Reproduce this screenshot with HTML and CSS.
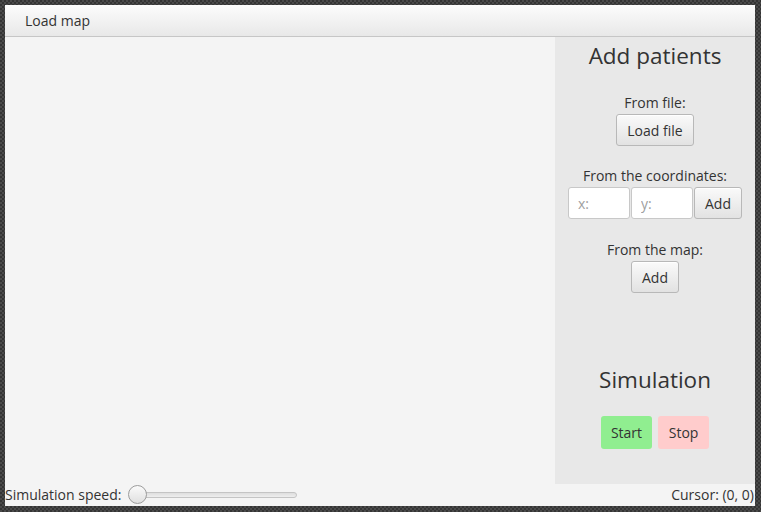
FILE: index.html
```html
<!DOCTYPE html>
<html>
<head>
<meta charset="utf-8">
<title>Simulation</title>
<link rel="stylesheet" href="styles.css">
</head>
<body>
<div class="window">
  <div class="menubar"><span class="menu">Load map</span></div>
  <div class="main">
    <div class="map"></div>
    <aside class="panel">
      <div class="title">Add patients</div>
      <div class="label first">From file:</div>
      <button class="btn">Load file</button>
      <div class="label">From the coordinates:</div>
      <div class="coords">
        <input class="field" type="text" placeholder="x:">
        <input class="field" type="text" placeholder="y:">
        <button class="btn">Add</button>
      </div>
      <div class="label map-label">From the map:</div>
      <button class="btn">Add</button>
      <div class="title sim">Simulation</div>
      <div class="controls">
        <button class="ctl start">Start</button>
        <button class="ctl stop">Stop</button>
      </div>
    </aside>
  </div>
  <div class="statusbar">
    <span class="speed-label">Simulation speed:</span>
    <div class="slider">
      <div class="track"></div>
      <div class="thumb"></div>
    </div>
    <span class="spacer"></span>
    <span class="cursor">Cursor: (0, 0)</span>
  </div>
</div>
</body>
</html>
```
FILE: styles.css
```css
* { box-sizing: border-box; }
html, body { margin: 0; height: 100%; }
body {
  background-color: #3c3c3c;
  background-image: repeating-conic-gradient(#4a4a4a 0 25%, #343434 0 50%);
  background-size: 4px 4px;
  padding: 5px 6px 6px 5px;
  font-family: "Open Sans", "Noto Sans", sans-serif;
  font-size: 14px;
  color: #333;
}
.window {
  width: 750px;
  height: 501px;
  display: flex;
  flex-direction: column;
  background: #f4f4f4;
}
.menubar {
  height: 32px;
  flex: none;
  display: flex;
  align-items: center;
  padding-left: 20px;
  background: linear-gradient(#fcfcfc, #e8e8e8);
  border-bottom: 1px solid #c6c6c6;
}
.menu { line-height: 18px; }
.main { flex: 1; display: flex; min-height: 0; }
.map { flex: 1; background: #f4f4f4; }
.panel {
  width: 200px;
  flex: none;
  background: #e8e8e8;
  display: flex;
  flex-direction: column;
  align-items: center;
  padding-top: 4px;
}
.title { font-size: 22.5px; line-height: 30px; }
.label { line-height: 18px; margin-top: 21px; margin-bottom: 2px; }
.label.first { margin-top: 23px; }
.label.map-label { margin-top: 22px; }
.coords { display: flex; gap: 1px; }
.btn {
  font: inherit;
  color: #333;
  height: 32px;
  padding: 0 10px;
  border: 1px solid #b8b8b8;
  border-radius: 3px;
  background: linear-gradient(#fafafa, #e2e2e2);
  box-shadow: inset 0 1px 0 #fff;
}
.field {
  width: 62px;
  height: 32px;
  font: inherit;
  color: #333;
  padding: 0 0 0 9px;
  border: 1px solid #c8c8c8;
  border-radius: 3px;
  background: #fff;
  outline: none;
}
.field::placeholder { color: #a0a0a0; }
.sim { margin-top: 72px; }
.controls { display: flex; gap: 6px; margin-top: 21px; }
.ctl {
  font: inherit;
  color: #333;
  height: 33px;
  min-width: 51px;
  padding: 0 10px;
  border: none;
  border-radius: 3px;
}
.start { background: #90ee90; }
.stop { background: #ffcccc; }
.statusbar {
  height: 22px;
  flex: none;
  display: flex;
  align-items: center;
  background: #f4f4f4;
}
.speed-label { line-height: 18px; }
.slider {
  position: relative;
  width: 177px;
  height: 20px;
  margin-left: 7px;
  display: flex;
  align-items: center;
}
.track {
  width: 160px;
  height: 6px;
  margin-left: 9px;
  border: 1px solid #c4c4c4;
  border-radius: 3px;
  background: linear-gradient(#dedede, #eeeeee);
}
.thumb {
  position: absolute;
  left: 0;
  top: 0;
  width: 19px;
  height: 19px;
  border-radius: 50%;
  border: 1px solid #9c9c9c;
  background: linear-gradient(#fafafa, #e0e0e0);
}
.spacer { flex: 1; }
.cursor { line-height: 18px; padding-right: 1px; }
```
